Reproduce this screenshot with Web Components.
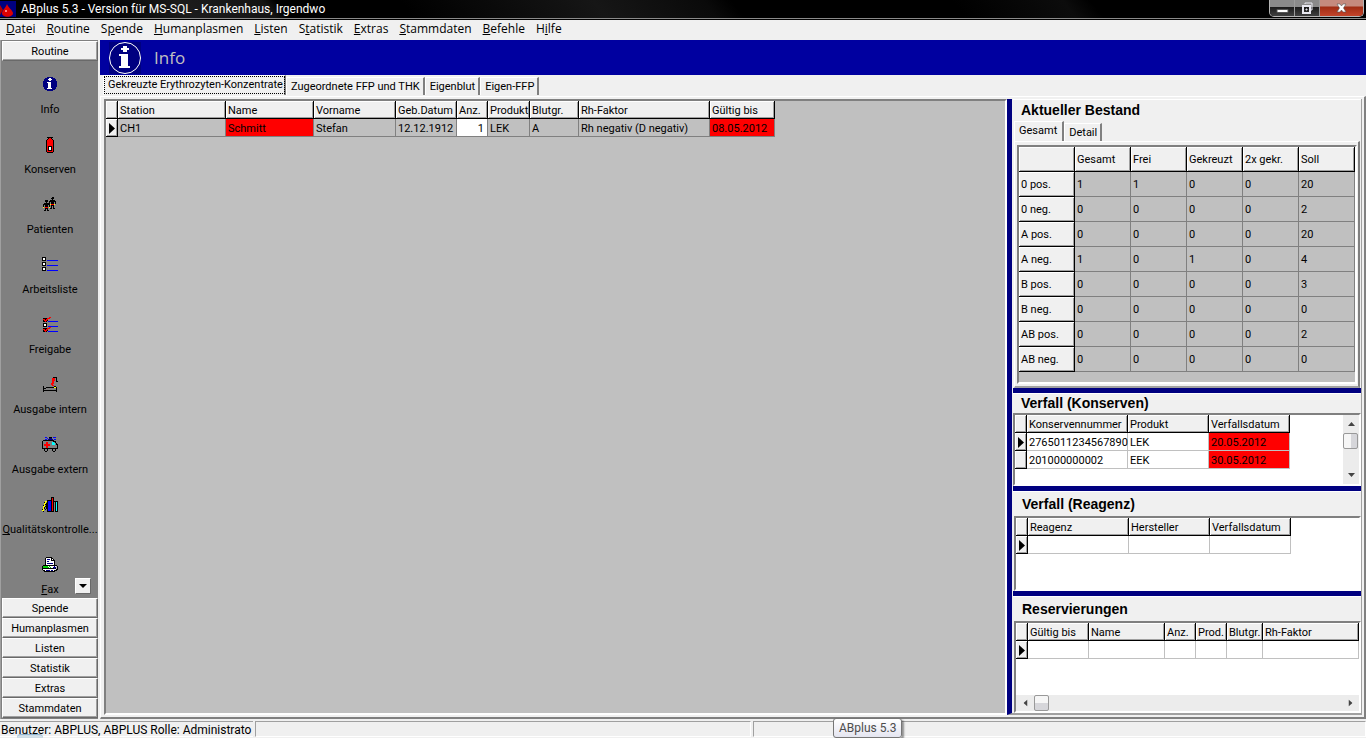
<!DOCTYPE html>
<html lang="de">
<head>
<meta charset="utf-8">
<title>ABplus 5.3</title>
<style>
html, body { margin: 0; height: 100%; }
body { background: #f0f0f0; overflow: hidden; }
</style>
</head>
<body>
<ab-app></ab-app>

<script>
const define = (name, html, setup) => {
  const tpl = document.createElement('template');
  tpl.innerHTML = html;
  customElements.define(name, class extends HTMLElement {
    connectedCallback() {
      if (this.shadowRoot) return;
      this.attachShadow({ mode: 'open' }).append(tpl.content.cloneNode(true));
      if (setup) setup(this, this.shadowRoot);
    }
  });
};

/* Toolbar pictures: one character per pixel, '.' is transparent. */
const PALETTE = { K: '#000', W: '#fff', R: '#f00', B: '#00f', N: '#000080', Y: '#ff0', G: '#0c0', C: '#0ff', S: '#808080', L: '#c0c0c0' };
const ICONS = {
  info: `
.....NNNNNN.....
...NNNNWWNNNN...
..NNNNWWWWNNNN..
..NNNNNWWNNNNN..
.NNNNNNNNNNNNNN.
.NNNNWWWWNNNNNN.
.NNNNNWWWNNNNNN.
.NNNNNWWWNNNNNN.
.NNNNNWWWNNNNNN.
.NNNNNWWWNNNNNN.
..NNNNWWWNNNNN..
..NNNWWWWWNNNN..
...NNNNNNNNNN...
.....NNNNNN.....`,
  bottle: `
.....KKKKKK.....
......KRRK......
.....KRRRRK.....
....KRRRRRRK....
....KRRRRRRK....
....KRRRRRRK....
....KRRRRRRK....
....KRRRRRRK....
....KRRRRRRK....
....KRKKKKRK....
....KRKWWKRK....
....KRKWWKRK....
....KRKWWKRK....
....KRKKKKRK....
....KRRRRRRK....
.....KKKKKK.....`,
  people: `
..........KK....
.........KKK....
..........K.....
...KKK..KKKKK...
...KKK.KKKKKKK..
....K..K.KKK.K..
..KKKKKK.KKK.K..
.KKKKKKKYRRRY...
.K.KKK.K.KKK....
.K.KKK.K.K.K....
.Y.RRR.Y.K.K....
...KKK..KK.KK...
...K.K..........
..KK.KK.........`,
  list: `
KKKK............
KWWK............
KWWK............
KKKK.BBBBBBBBBBB
................
KKKK............
KWWK............
KWWK............
KKKK.BBBBBBBBBBB
................
KKKK............
KWWK............
KWWK............
KKKK.BBBBBBBBBBB`,
  check: `
.......RR.......
.KKKKRRR........
.RRKRR..........
.KRRRK..........
.KKRK.BBBBBBBBBB
................
.KKKK...........
.KWWK...........
.KWWK...........
.KKKK.BBBBBBBBBB
.......RR.......
.KKKKRRR........
.RRKRR..........
.KRRRK..........
.KKRK.BBBBBBBBBB`,
  bed: `
...........KKKK.
..........RRR.K.
..........RRR.K.
..........RRR.K.
..........RR..KK
..........RR....
.........RRR....
.........RR.....
..........RR....
.K..........KK..
.K..KKKKKKKKYYK.
.KKK..........K.
.K............K.
.KKKKKKKKKKKKKK.
.K............K.`,
  ambulance: `
...BB..KKK.BBB..
.....B.NNN......
...BB.NNNNN.BB..
.KKKKKKKKKKK....
K..........KKK..
K...RR....CC.K..
K...RR....CCC.K.
K.RRRRRR..CCC.KK
K.RRRRRR.......K
K...RR.........K
K...RR.........K
KKKKKKKKKKKKKKKK
..K..K....K..K..
..K..K....K..K..
...KK......KK...`,
  books: `
.........KKK....
.........KRK....
.........KRK....
.....KKKKKRK....
...YYKBBBKRKKKKK
..KY.KBBBKRK.KCK
..YYKKBBBKRK.KCK
..YKKKBBBKRK.KCK
.KY.KKBBBKRK.KCK
.YYKKKBBBKRK.KCK
.YK.KKBBBKRK.KCK
.YK.KKBBBKRK.KCK
KY.K.KBBBKRK.KCK
YY...KBBBKRK.KCK
.K...KKKKKKK.KKK`,
  fax: `
....KKKKKK......
...KWWWWWKK.....
...KWNNNWKWK....
...KWWWWWKKKK...
...KWNNWWWWWK...
...KWWWWWWWWK...
...KWNNNNNNWK...
...KWWWWWWWWK...
.KKKKKKKKKKKKKK.
KGGGGGWGWWWWNWLK
KGGGGGGWGWWNNNLK
KKKKKKKKKKKKNKLK
KWWWWWWWWWWWWWKK
.KKWNNNNWNNWKKK.
..KKKKKKKKKKK...`
};
define('ab-icon', `<style>:host{display:block;width:16px;height:16px}svg{display:block}</style>`, (host, root) => {
  const rows = ICONS[host.getAttribute('name')].trim().split('\n');
  let s = '';
  rows.forEach((row, y) => {
    for (let x = 0; x < row.length;) {
      let n = 1;
      while (row[x + n] === row[x]) n++;
      if (row[x] !== '.') s += `<rect x="${x}" y="${y}" width="${n}" height="1" fill="${PALETTE[row[x]]}"/>`;
      x += n;
    }
  });
  root.innerHTML += `<svg width="16" height="16" viewBox="0 0 16 16" shape-rendering="crispEdges" aria-hidden="true">${s}</svg>`;
});

define('ab-titlebar', `
<style>
:host { display: flex; align-items: flex-start; height: 20px; box-sizing: border-box; color: #fff; border-bottom: 1px solid #000;
  background: linear-gradient(52deg, #000 0 8%, #1c1c1c 14%, #141414 20%, #000 21% 30%, #161616 44%, #0a0a0a 52%, #000 54% 70%, #0c0c0c 78%, #000 80%);
  font: 12px/19px Roboto, "Noto Sans", sans-serif; box-shadow: inset 0 -1px #8a8a8a; }
.logo { width: 16px; height: 17px; flex: none; }
h1 { flex: 1; margin: 0 0 0 5px; font: inherit; white-space: nowrap; }
.btns { display: flex; margin-right: 2px; height: 17px; box-sizing: border-box; border: 1px solid #b4b4b4; border-top: 0; border-radius: 0 0 5px 5px; overflow: hidden; }
button { border: 0; padding: 0; margin: 0; height: 16px; width: 25px; display: grid; place-items: center; background: linear-gradient(#8a8a8a 0 7px, #1a1a1a 7px, #404040); border-right: 1px solid #9a9a9a; }
button.close { width: 43px; border: 0; background: linear-gradient(#c58a7e 0 6px, #a02c14 7px, #c4442a); }
svg { display: block; }
</style>
<svg class="logo" viewBox="0 0 16 17"><path fill="#000080" d="M0 1h16v16H0z"/><path fill="#e00000" d="M7 4c1 3 6 7 6 9 0 5-11 5-11 0 0-2 4-6 5-9z"/><path fill="#b00000" d="M0 5l3 5-3 5z"/><path fill="#ff8080" d="M5 10h2v2H5z"/></svg>
<h1><slot></slot></h1>
<div class="btns">
<button aria-label="Minimieren"><svg width="13" height="14"><path d="M1 8.500h11v3H1z" fill="#fff" stroke="#555"/></svg></button>
<button aria-label="Wiederherstellen"><svg width="13" height="14" fill="none" stroke="#e8e8f0" stroke-width="2"><path d="M4 3V2h7v7h-1" stroke-width="1"/><path d="M2 5h7v7H2z"/><path d="M5 8h1v1H5z" stroke-width="1"/></svg></button>
<button class="close" aria-label="Schließen"><svg width="13" height="14"><path d="M2 3h3l1.500 2L8 3h3L8.500 7 11 11H8L6.500 9 5 11H2l2.500-4z" fill="#fff" stroke="#555" stroke-width=".6"/></svg></button>
</div>`);

define('ab-menubar', `
<style>
:host { display: block; height: 20px; background: #f0f0f0; font: 12px/18px "Open Sans", "Noto Sans", sans-serif; }
nav { display: flex; gap: 11px; padding-left: 6px; }
::slotted(a) { color: #000; text-decoration: none; white-space: nowrap; }
</style>
<nav><slot></slot></nav>`);

define('ab-group', `
<style>
:host { display: block; flex: none; height: 20px; }
button { display: block; width: 100%; height: 20px; box-sizing: border-box; padding: 0; background: #f0f0f0; color: #000;
  border: 1px solid #fff; border-right-color: #696969; border-bottom-color: #696969; box-shadow: inset -1px -1px #a0a0a0;
  font: 11px/17px Roboto, Arial, sans-serif; }
</style>
<button><slot></slot></button>`);

define('ab-nav-item', `
<style>
:host { display: block; flex: none; }
button { display: flex; flex-direction: column; align-items: center; gap: 10px; width: 100%; height: 60px; box-sizing: border-box; padding: 8px 0 0; border: 0; background: none; color: #000;
  font: 11px/14px Roboto, Arial, sans-serif; white-space: nowrap; }
</style>
<button><span><slot></slot></span></button>`, (host, root) => {
  const icon = document.createElement('ab-icon');
  icon.setAttribute('name', host.getAttribute('icon'));
  root.querySelector('button').prepend(icon);
});

define('ab-sidebar', `
<style>
:host { display: flex; flex-direction: column; flex: none; width: 98px; box-sizing: border-box; padding: 1px 0 1px 1px; border-left: 1px solid #a0a0a0; background: #808080; }
.items { flex: 1; min-height: 0; position: relative; overflow: hidden; padding-top: 8px; }
.more { position: absolute; right: 7px; bottom: 4px; width: 16px; height: 16px; padding: 0; display: grid; place-items: center; background: #f0f0f0; border: 1px solid #fff; border-right-color: #696969; border-bottom-color: #696969; }
svg { display: block; }
</style>
<ab-group>Routine</ab-group>
<div class="items"><slot></slot><button class="more" aria-label="Weiter"><svg width="8" height="4"><path d="M0 0h8L4 4z"/></svg></button></div>
<ab-group>Spende</ab-group><ab-group>Humanplasmen</ab-group><ab-group>Listen</ab-group><ab-group>Statistik</ab-group><ab-group>Extras</ab-group><ab-group>Stammdaten</ab-group>`);

define('ab-header', `
<style>
:host { display: flex; align-items: center; gap: 12px; height: 35px; padding-left: 8px; background: #0000a0; color: #c0c0c0; font: 17px/20px "Open Sans", "Noto Sans", sans-serif; }
h2 { margin: 0; font: inherit; }
svg { display: block; }
</style>
<svg width="34" height="35" viewBox="0 0 34 35" aria-hidden="true"><path fill="#000080" d="M1 2h32v32H1z"/><circle cx="17" cy="18" r="15.500" fill="none" stroke="#fff"/><path fill="#fff" shape-rendering="crispEdges" d="M15 6h4v2h2v2h-2v2h-4v-2h-2V8h2zM11 14h9v12h2v2H11v-2h2V16h-2z"/></svg>
<h2><slot></slot></h2>`);

/* Tab strip: labels separated by '|', the first one is selected. */
define('ab-tabs', `
<style>
:host { display: flex; align-items: flex-end; box-sizing: border-box; font: 11px/14px Roboto, Arial, sans-serif; color: #000; }
button { font: inherit; color: inherit; background: #f0f0f0; margin: 0; white-space: nowrap; height: 18px; box-sizing: border-box; padding: 1px 3px 0 4px; border: 1px solid #fff; border-width: 1px 2px 0 1px; border-right-color: #808080; }
button[aria-selected="true"] { height: 20px; padding: 1px 5px 3px 4px; }
:host([focus]) button[aria-selected="true"] { padding: 1px 1px 3px 4px; outline: 1px dotted #000; outline-offset: -2px; }
</style>`, (host, root) => {
  host.setAttribute('role', 'tablist');
  host.getAttribute('labels').split('|').forEach((t, i) => {
    const b = document.createElement('button');
    b.textContent = t;
    b.setAttribute('role', 'tab');
    b.setAttribute('aria-selected', String(i === 0));
    root.append(b);
  });
});

define('ab-grid', `
<style>
:host { display: flex; flex-direction: column; box-sizing: border-box; min-width: 0; min-height: 0; overflow: hidden; background: #fff; --line: #c0c0c0;
  border: 2px solid; border-color: #808080 #fff #fff #808080; font: 11px/15px Roboto, Arial, sans-serif; color: #000; }
:host([gray]) { background: #c0c0c0; --line: #808080; }
.body { flex: 1; display: flex; min-height: 0; align-items: stretch; }
.area { flex: 1; min-width: 0; overflow: hidden; }
table { border-collapse: separate; border-spacing: 0; table-layout: fixed; width: 1px; }
table.wide { width: 100%; }
th, td { box-sizing: border-box; height: 18px; padding: 1px 0 0 2px; white-space: nowrap; text-align: left; font-weight: normal; border-right: 1px solid var(--line); border-bottom: 1px solid var(--line); }
th { background: #f0f0f0; overflow: hidden; border-color: #000; box-shadow: inset 1px 1px #fff, inset -1px -1px #a0a0a0; }
.num { background: #fff; text-align: right; padding: 1px 3px 0 0; }
.alarm { background: #f00; }
:host([stock]) th, :host([stock]) td { height: 25px; }
svg { display: block; }
</style>
<div class="body"><div class="area"><table><colgroup></colgroup><thead><tr></tr></thead><tbody></tbody></table></div><slot name="vscroll"></slot></div>
<slot name="hscroll"></slot>`, (host, root) => {
  const get = n => (host.getAttribute(n) || '').split('|');
  const add = (parent, tag, text) => { const e = document.createElement(tag); e.textContent = text; parent.append(e); return e; };
  const table = root.querySelector('table'), widths = get('widths').map(Number);
  widths.forEach(w => { const c = add(root.querySelector('colgroup'), 'col', ''); if (w) c.style.width = w + 'px'; else table.className = 'wide'; });
  get('heads').forEach(t => add(root.querySelector('thead tr'), 'th', t).scope = 'col');
  host.getAttribute('rows').split(';').forEach(r => {
    const tr = add(root.querySelector('tbody'), 'tr', '');
    r.split('|').forEach((t, i) => {
      const c = add(tr, i ? 'td' : 'th', t.replace(/^[!#>]/, ''));
      if (!i) c.scope = 'row';
      if (t[0] === '!') c.className = 'alarm';
      if (t[0] === '#') c.className = 'num';
      if (t[0] === '>') c.innerHTML = '<svg width="8" height="11" aria-label="Aktuelle Zeile"><path d="M1 0l6 5.500-6 5.500z"/></svg>';
    });
  });
});

define('ab-scrollbar', `
<style>
:host { display: flex; flex: none; width: 16px; flex-direction: column; background: #ececec; }
:host([horizontal]) { flex-direction: row; width: auto; height: 16px; }
button { flex: none; width: 16px; height: 18px; padding: 0; border: 0; background: none; display: grid; place-items: center; color: #444; }
:host([horizontal]) button { width: 18px; height: 16px; }
button:last-child { margin-top: auto; }
:host([horizontal]) button:last-child { margin: 0 0 0 auto; }
:host([horizontal]) button svg { transform: rotate(-90deg); }
i { flex: none; width: 15px; height: 16px; box-sizing: border-box; border: 1px solid #999; border-radius: 2px; background: linear-gradient(90deg, #f6f6f6 50%, #d6d6da 50%); }
:host([horizontal]) i { background: linear-gradient(#f6f6f6 50%, #d6d6da 50%); }
</style>
<button aria-label="Zurück"><svg width="7" height="4" fill="currentColor"><path d="M0 4h7L3.500 0z"/></svg></button><i></i>
<button aria-label="Vor"><svg width="7" height="4" fill="currentColor"><path d="M0 0h7L3.500 4z"/></svg></button>`);

define('ab-section', `
<style>
:host { display: flex; flex-direction: column; min-height: 0; box-sizing: border-box; border-top: 1px solid #fff; }
h3 { flex: none; margin: 0; padding-left: 8px; color: #000; font: bold 14px/21px "Liberation Sans", Arial, sans-serif; }
:host([roomy]) { padding-left: 1px; }
:host([roomy]) h3 { line-height: 24px; }
:host([dense]) h3 { line-height: 19px; }
::slotted(ab-grid) { flex: 1; }
</style>
<h3><slot name="title"></slot></h3><slot></slot>`);

define('ab-page', `
<style>
:host { display: flex; flex: 1; min-height: 0; margin: 0 1px; box-sizing: border-box; padding: 3px 1px 2px 2px; border: 1px solid #fff; border-right: 2px solid #808080; border-bottom: 2px solid #a0a0a0; }
::slotted(*) { flex: 1; }
</style><slot></slot>`);

define('ab-statusbar', `
<style>
:host { display: flex; position: relative; flex: none; height: 19px; box-sizing: border-box; gap: 2px; padding: 2px 0 1px; background: #f0f0f0; color: #000; font: 12px/16px Roboto, "Noto Sans", sans-serif; }
div { box-sizing: border-box; border: 1px solid; border-color: #a0a0a0 #fff #fff #a0a0a0; overflow: hidden; white-space: nowrap; }
.user { width: 253px; padding-left: 1px; border-left: 0; border-right: 0; }
.mid { width: 496px; }
.rest { flex: 1; }
.orb { position: absolute; left: 17px; bottom: 0; width: 26px; height: 4px; border: 0; border-top: 1px solid #8fb4d0; border-radius: 13px 13px 0 0; background: #b8cede99; }
.tip { position: absolute; left: 833px; bottom: 0; height: 20px; padding: 0 5px; border: 1px solid #767676; border-radius: 3px; background: linear-gradient(#fff, #e4e5f0); color: #4c4c4c; box-shadow: 2px 2px 2px #0006; line-height: 18px; }
</style>
<div class="user"><slot></slot></div><div class="mid"></div><div class="rest"></div>
<div class="orb"></div><div class="tip" role="tooltip">ABplus 5.3</div>`);

define('ab-app', `
<style>
:host { display: flex; flex-direction: column; height: 100vh; min-height: 600px; overflow: hidden; }
.work { flex: 1; display: flex; min-height: 0; gap: 2px; }
main { flex: 1; display: flex; flex-direction: column; min-width: 0; }
.tabs { flex: none; height: 21px; padding: 0 0 1px 3px; }
.side { flex: none; padding-left: 1px; }
.frame { flex: 1; display: flex; min-height: 0; padding: 2px 2px 2px 3px; border: 1px solid #fff; border-right: 2px solid #808080; border-bottom: 2px solid #808080; }
.frame > ab-grid { flex: 1; }
aside { flex: none; width: 355px; box-sizing: border-box; display: grid; grid-template-rows: 289px 5px 93px 5px 100px 5px minmax(0, 1fr); border-left: 5px solid #000080; border-right: 1px solid #a0a0a0; border-bottom: 2px solid #a0a0a0; padding-left: 1px; }
hr { margin: 0; border: 0; background: #000080; }
</style>
<ab-titlebar>ABplus 5.3 - Version für MS-SQL - Krankenhaus, Irgendwo</ab-titlebar>
<ab-menubar><a href="#"><u>D</u>atei</a><a href="#"><u>R</u>outine</a><a href="#">S<u>p</u>ende</a><a href="#"><u>H</u>umanplasmen</a><a href="#"><u>L</u>isten</a><a href="#">S<u>t</u>atistik</a><a href="#"><u>E</u>xtras</a><a href="#"><u>S</u>tammdaten</a><a href="#"><u>B</u>efehle</a><a href="#">H<u>i</u>lfe</a></ab-menubar>
<div class="work">
  <ab-sidebar>
    <ab-nav-item icon="info">Info</ab-nav-item>
    <ab-nav-item icon="bottle">Konserven</ab-nav-item>
    <ab-nav-item icon="people">Patienten</ab-nav-item>
    <ab-nav-item icon="list">Arbeitsliste</ab-nav-item>
    <ab-nav-item icon="check">Freigabe</ab-nav-item>
    <ab-nav-item icon="bed">Ausgabe intern</ab-nav-item>
    <ab-nav-item icon="ambulance">Ausgabe extern</ab-nav-item>
    <ab-nav-item icon="books"><u>Q</u>ualitätskontrolle...</ab-nav-item>
    <ab-nav-item icon="fax"><u>F</u>ax</ab-nav-item>
  </ab-sidebar>
  <main>
    <ab-header>Info</ab-header>
    <ab-tabs class="tabs" focus labels="Gekreuzte Erythrozyten-Konzentrate|Zugeordnete FFP und THK|Eigenblut|Eigen-FFP"></ab-tabs>
    <div class="frame">
      <ab-grid gray widths="12|108|88|82|61|31|42|49|131|65" heads="|Station|Name|Vorname|Geb.Datum|Anz.|Produkt|Blutgr.|Rh-Faktor|Gültig bis" rows="&gt;|CH1|!Schmitt|Stefan|12.12.1912|#1|LEK|A|Rh negativ (D negativ)|!08.05.2012"></ab-grid>
      <aside>
        <ab-section><span slot="title">Aktueller Bestand</span>
          <ab-tabs class="side" labels="Gesamt|Detail"></ab-tabs>
          <ab-page><ab-grid gray stock widths="56|56|56|56|56|56" heads="|Gesamt|Frei|Gekreuzt|2x gekr.|Soll" rows="0 pos.|1|1|0|0|20;0 neg.|0|0|0|0|2;A pos.|0|0|0|0|20;A neg.|1|0|1|0|4;B pos.|0|0|0|0|3;B neg.|0|0|0|0|0;AB pos.|0|0|0|0|2;AB neg.|0|0|0|0|0"></ab-grid></ab-page>
        </ab-section>
        <hr>
        <ab-section dense><span slot="title">Verfall (Konserven)</span>
          <ab-grid widths="12|101|81|81" heads="|Konservennummer|Produkt|Verfallsdatum" rows="&gt;|2765011234567890|LEK|!20.05.2012;|201000000002|EEK|!30.05.2012"><ab-scrollbar slot="vscroll"></ab-scrollbar></ab-grid>
        </ab-section>
        <hr>
        <ab-section roomy><span slot="title">Verfall (Reagenz)</span>
          <ab-grid widths="12|101|81|81" heads="|Reagenz|Hersteller|Verfallsdatum" rows="&gt;|||"></ab-grid>
        </ab-section>
        <hr>
        <ab-section roomy><span slot="title">Reservierungen</span>
          <ab-grid widths="12|61|76|31|31|36|0" heads="|Gültig bis|Name|Anz.|Prod.|Blutgr.|Rh-Faktor" rows="&gt;||||||"><ab-scrollbar horizontal slot="hscroll"></ab-scrollbar></ab-grid>
        </ab-section>
      </aside>
    </div>
  </main>
</div>
<ab-statusbar>Benutzer: ABPLUS, ABPLUS Rolle: Administrato</ab-statusbar>`);
</script>
</body>
</html>
